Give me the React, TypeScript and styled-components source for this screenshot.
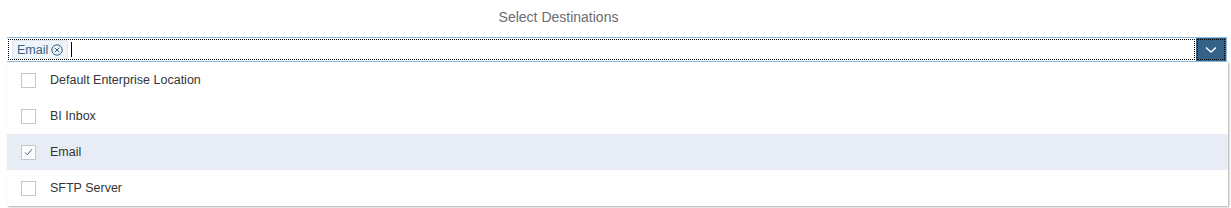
import React from "react";
import styled, { createGlobalStyle } from "styled-components";

const Global = createGlobalStyle`
  html, body { margin: 0; padding: 0; background: #ffffff; }
  body { font-family: "Liberation Sans", Arial, sans-serif; }
`;

const Page = styled.div`
  width: 1231px;
  height: 208px;
  display: flex;
  flex-direction: column;
  overflow: hidden;
`;

const Title = styled.div`
  height: 37px;
  display: flex;
  align-items: center;
  justify-content: center;
  font-size: 14px;
  color: #6a6d70;
  padding: 0 114px 3px 0;
  box-sizing: border-box;
`;

const Field = styled.div`
  margin: 0 4px 0 7px;
  height: 25px;
  box-sizing: border-box;
  border: 1px solid #8fb9da;
  border-left: none;
  display: flex;
  position: relative;
`;

const Inner = styled.div`
  flex: 1;
  display: flex;
  align-items: center;
  gap: 3px;
  padding-left: 5px;
  outline: 1px dotted #000;
  outline-offset: -2px;
`;

const Token = styled.span`
  display: inline-flex;
  align-items: center;
  gap: 3px;
  height: 19px;
  padding: 0 4px;
  box-sizing: border-box;
  background: #eff4f9;
  border: 1px solid #dfe6ee;
  border-radius: 2px;
  color: #346187;
  font-size: 12.5px;
`;

const Caret = styled.span`
  width: 1px;
  height: 15px;
  background: #000;
`;

const Arrow = styled.div`
  width: 30px;
  background: #346187;
  display: flex;
  align-items: center;
  justify-content: center;
  outline: 1px dotted #000;
  outline-offset: -2px;
`;

const Popover = styled.div`
  margin: 0 3px 0 7px;
  background: #fff;
  box-shadow: 1px 1px 2px rgba(0, 0, 0, 0.35);
  display: flex;
  flex-direction: column;
`;

const Row = styled.div<{ $selected?: boolean }>`
  height: 36px;
  display: flex;
  align-items: center;
  padding-left: 14px;
  gap: 14px;
  background: ${(p) => (p.$selected ? "#e8edf5" : "#fff")};
  font-size: 12.5px;
  color: #32363a;
`;

const Box = styled.span`
  width: 15px;
  height: 15px;
  box-sizing: border-box;
  border: 1px solid #c3c7cb;
  background: #fff;
  display: flex;
  align-items: center;
  justify-content: center;
`;

const items = [
  { label: "Default Enterprise Location", checked: false },
  { label: "BI Inbox", checked: false },
  { label: "Email", checked: true },
  { label: "SFTP Server", checked: false },
];

export default function App() {
  return (
    <>
      <Global />
      <Page>
        <Title>Select Destinations</Title>
        <Field>
          <Inner>
            <Token>
              Email
              <svg width="12" height="12" viewBox="0 0 12 12" fill="none" stroke="#346187" strokeWidth="1">
                <circle cx="6" cy="6" r="5.2" />
                <path d="M3.8 3.8 L8.2 8.2 M8.2 3.8 L3.8 8.2" />
              </svg>
            </Token>
            <Caret />
          </Inner>
          <Arrow>
            <svg width="12" height="8" viewBox="0 0 12 8" fill="none" stroke="#fff" strokeWidth="1.6">
              <path d="M1 1.5 L6 6 L11 1.5" />
            </svg>
          </Arrow>
        </Field>
        <Popover>
          {items.map((it) => (
            <Row key={it.label} $selected={it.checked}>
              <Box>
                {it.checked && (
                  <svg width="9" height="8" viewBox="0 0 9 8" fill="none" stroke="#346187" strokeWidth="1">
                    <path d="M1 4.5 L3.3 6.8 L8 1.2" />
                  </svg>
                )}
              </Box>
              {it.label}
            </Row>
          ))}
        </Popover>
      </Page>
    </>
  );
}
